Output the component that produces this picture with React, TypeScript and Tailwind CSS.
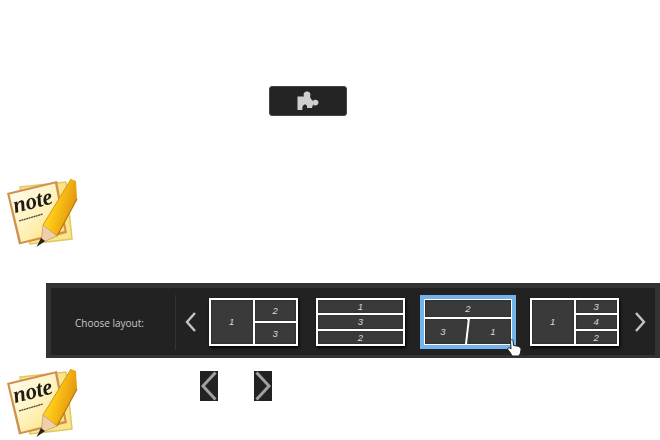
import React from "react";

function NoteIcon() {
  return (
    <svg width="78" height="75" viewBox="0 0 78 75" className="block shrink-0 blur-[0.5px]">
      <defs>
        <linearGradient id="paper" x1="0" y1="0" x2="1" y2="1">
          <stop offset="0" stopColor="#fffef2" />
          <stop offset="0.5" stopColor="#fff3bf" />
          <stop offset="1" stopColor="#fddc6e" />
        </linearGradient>
        <linearGradient id="pencil" x1="0" y1="0" x2="1" y2="0.45">
          <stop offset="0" stopColor="#fff04a" />
          <stop offset="0.5" stopColor="#fcc516" />
          <stop offset="1" stopColor="#e0920e" />
        </linearGradient>
      </defs>
      <polygon points="20,12 66,7 72,64 30,69" fill="#fbe589" stroke="#e0c765" strokeWidth="1.5" />
      <polygon points="7,18 57,6 67,58 19,69.5" fill="#cf9150" />
      <polygon points="9.5,19.5 55,8.5 64.5,56 21,67" fill="url(#paper)" />
      <text
        x="15"
        y="38"
        transform="rotate(-14 15 38)"
        fontFamily="'Liberation Serif', serif"
        fontStyle="italic"
        fontWeight="700"
        fontSize="23"
        fill="#1f1c18"
        textLength="40"
        lengthAdjust="spacingAndGlyphs"
      >
        note
      </text>
      <path d="M19 46 L43 39" stroke="#4a4436" strokeWidth="1.3" strokeDasharray="2 0.5" />
      <polygon points="71,4 76,6 77,24 57,61 43,50" fill="url(#pencil)" />
      <path d="M43 50 L71 4" stroke="#d49a18" strokeWidth="1" />
      <path d="M57 61 L77 24" stroke="#b9780c" strokeWidth="1.2" />
      <polygon points="43,50 57,61 41,68" fill="#efcfa8" stroke="#b08a60" strokeWidth="0.6" />
      <polygon points="41,63 45,66 36.5,72" fill="#26221c" />
    </svg>
  );
}

function Cell({ children, className = "" }: { children?: React.ReactNode; className?: string }) {
  return (
    <div className={`flex items-center justify-center bg-[#3a3a3a] italic text-[9.5px] leading-none text-[#d8d8d8] shadow-[inset_0_0_2px_#222] ${className}`}>
      {children}
    </div>
  );
}

function Chevron({ dir, className = "" }: { dir: "l" | "r"; className?: string }) {
  return (
    <svg width="11" height="20" viewBox="0 0 11 20" className={className}>
      <path
        d={dir === "l" ? "M10 1 L2 10 L10 19" : "M1 1 L9 10 L1 19"}
        fill="none"
        stroke="#c4c4c4"
        strokeWidth="2.4"
      />
    </svg>
  );
}

const thumb = "grid h-[48px] w-[89px] shrink-0 gap-[2px] bg-white p-[2px] shadow-[1px_2px_3px_#000]";

function SmallChevron({ dir }: { dir: "l" | "r" }) {
  return (
    <div className="h-[30px] w-[18px] bg-[#222222]">
      <svg width="18" height="30" viewBox="0 0 18 30" className="block">
        <path
          d={dir === "l" ? "M15.5 1.5 L3 15 L15.5 28.5" : "M2.5 1.5 L15 15 L2.5 28.5"}
          fill="none"
          stroke="#a0a0a0"
          strokeWidth="3"
        />
      </svg>
    </div>
  );
}

export default function App() {
  return (
    <div className="flex h-[440px] w-[660px] flex-col overflow-hidden bg-white pt-[86px] font-['Liberation_Sans',sans-serif]">
      <div className="ml-[269px] flex h-[30px] w-[78px] shrink-0 items-center justify-center rounded-[3px] border border-[#444444] bg-[#242424]">
        <svg width="22" height="20" viewBox="0 0 22 20" className="blur-[0.5px]">
          <path
            d="M0.5 5.5 L7 5.5 C6 3 7 0.5 10 0.5 C13 0.5 14 3 13 5.5 L14 8 L16 10 C17 8 21.5 8 21.5 11.5 C21.5 15 17 15 16 13.5 L15 17 L10 17 C10.5 15 9.5 13.5 8 13.5 C6 13.5 5 16 5.5 19 L0.5 19 Z"
            fill="#cfcfcf"
          />
        </svg>
      </div>

      <div className="mt-[59px] shrink-0">
        <NoteIcon />
      </div>

      <div className="ml-[46px] mt-[33px] h-[75px] w-[614px] shrink-0 bg-[#333333] px-[5px] pb-[3px] pt-[5px]">
        <div className="flex h-full items-center bg-[#222222] pt-[1px]">
          <div className="flex w-[125px] items-center justify-between self-stretch pb-[5px] pl-[24px] pt-[6px]">
            <span className="font-['Open_Sans',sans-serif] text-[10px] leading-none text-[#c8c8c8]">Choose layout:</span>
            <div className="h-full w-px bg-[#333333]" />
          </div>
          <Chevron dir="l" className="ml-[9px]" />
          <div className={`${thumb} ml-[13px] grid-cols-2 grid-rows-2`}>
            <Cell className="row-span-2">1</Cell>
            <Cell>2</Cell>
            <Cell>3</Cell>
          </div>
          <div className={`${thumb} ml-[18px] grid-rows-3`}>
            <Cell>1</Cell>
            <Cell>3</Cell>
            <Cell>2</Cell>
          </div>
          <div className="relative ml-[15px] h-[54px] w-[96px] shrink-0 border-[4px] border-[#74b4ee] bg-white p-[1px]">
            <div className="grid h-full grid-cols-2 grid-rows-[17px_1fr] gap-[2px]">
              <Cell className="col-span-2">2</Cell>
              <Cell className="pr-[6px]">3</Cell>
              <Cell className="pl-[6px]">1</Cell>
            </div>
            <svg width="88" height="26" viewBox="0 0 88 26" className="absolute left-[1px] top-[19px]">
              <path d="M44 2 L41 26" stroke="#3a3a3a" strokeWidth="6" />
              <path d="M44 0 L41 26" stroke="#ffffff" strokeWidth="2" />
            </svg>
            <svg width="15" height="18" viewBox="0 0 15 18" className="absolute left-[83px] top-[40px]">
              <path
                d="M3.5 1.5 C3.8 0.5 5.8 0.5 6 1.5 L6.5 6.5 L10 7 C12.5 7.5 14 8.5 14 10.5 L13.5 14 L12 17 L5 17 L3.5 14 L0.8 10.5 C0.3 9.2 1.8 8.3 2.8 9 L4 10 Z"
                fill="#ffffff"
                stroke="#222222"
                strokeWidth="1"
              />
            </svg>
          </div>
          <div className={`${thumb} ml-[14px] grid-cols-2 grid-rows-3`}>
            <Cell className="row-span-3">1</Cell>
            <Cell>3</Cell>
            <Cell>4</Cell>
            <Cell>2</Cell>
          </div>
          <Chevron dir="r" className="ml-[16px]" />
        </div>
      </div>

      <div className="mt-[7px] flex shrink-0 items-start">
        <NoteIcon />
        <div className="ml-[122px] mt-[6px]">
          <SmallChevron dir="l" />
        </div>
        <div className="ml-[36px] mt-[6px]">
          <SmallChevron dir="r" />
        </div>
      </div>
    </div>
  );
}
